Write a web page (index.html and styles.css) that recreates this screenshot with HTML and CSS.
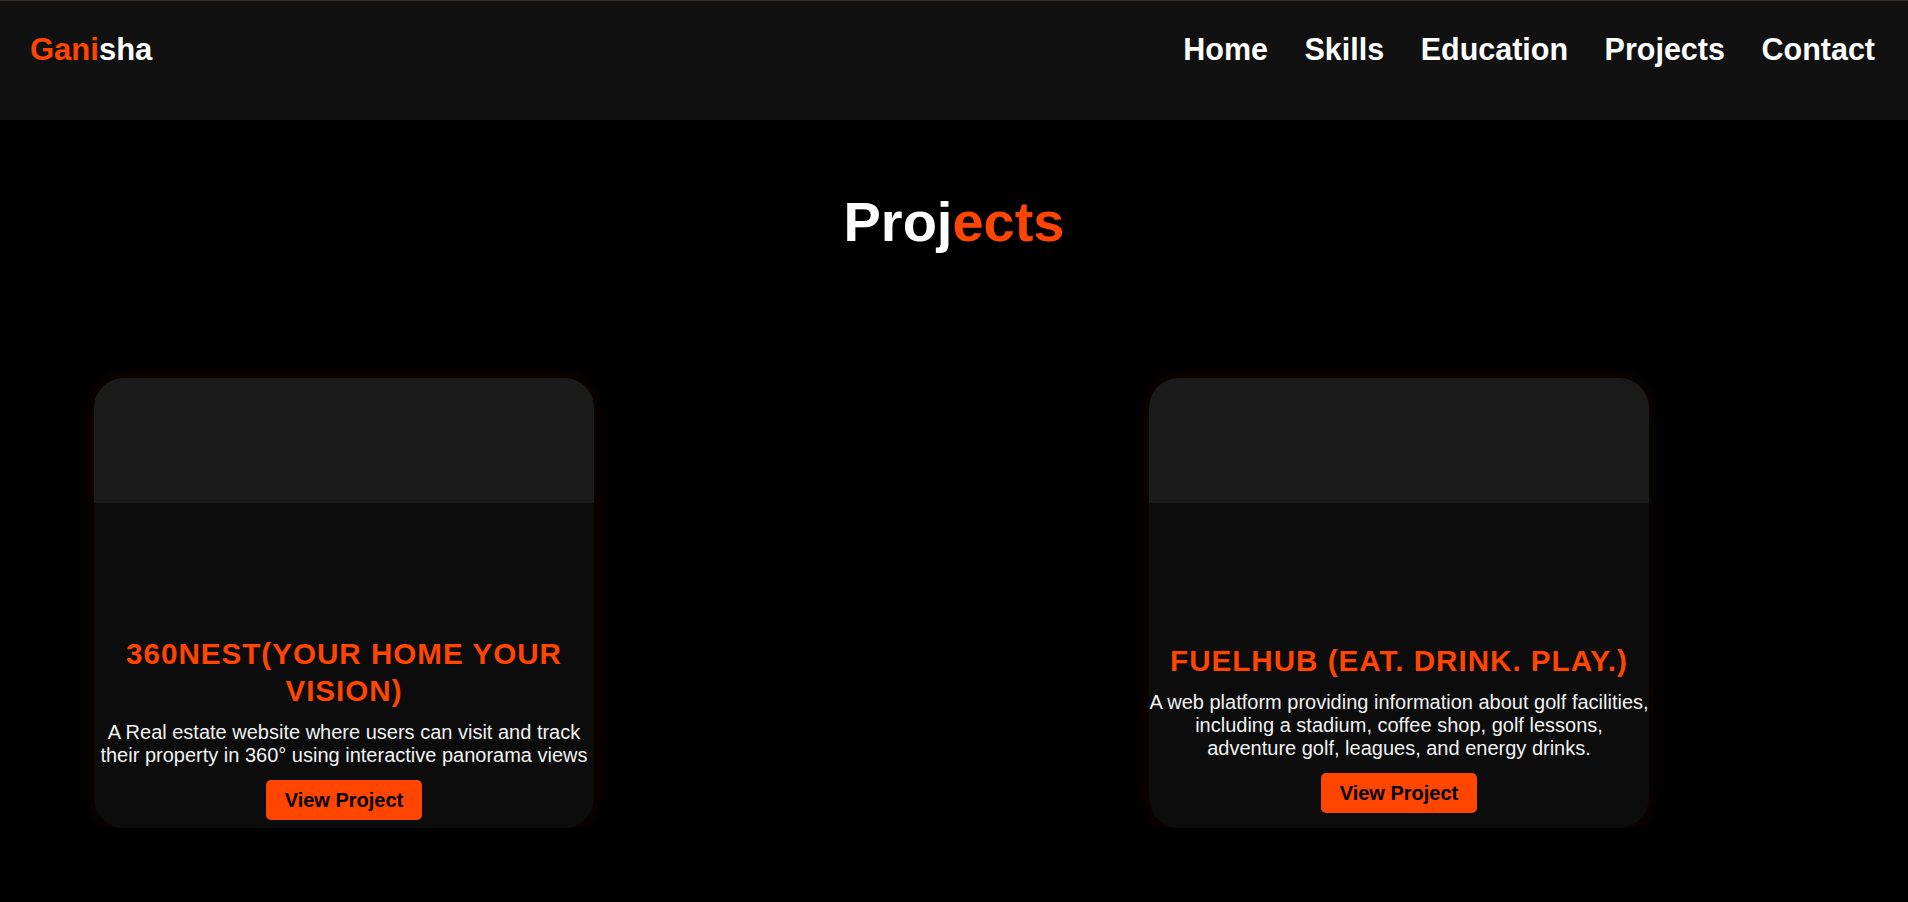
FILE: index.html
```html
<!DOCTYPE html>
<html lang="en">
<head>
<meta charset="utf-8">
<title>Ganisha - Projects</title>
<link rel="stylesheet" href="styles.css">
</head>
<body>
  <header class="site-header">
    <a class="logo" href="#"><span class="accent">Gani</span>sha</a>
    <nav class="nav">
      <a href="#">Home</a>
      <a href="#">Skills</a>
      <a href="#">Education</a>
      <a href="#">Projects</a>
      <a href="#">Contact</a>
    </nav>
  </header>

  <main class="projects">
    <h2 class="section-title">Proj<span class="accent">ects</span></h2>
    <div class="project-grid">
      <article class="card">
        <div class="card-media"></div>
        <div class="card-body">
          <h3 class="card-title">360NEST(YOUR HOME YOUR VISION)</h3>
          <p class="card-desc">A Real estate website where users can visit and track their property in 360° using interactive panorama views</p>
          <a class="btn" href="#">View Project</a>
        </div>
      </article>
      <article class="card">
        <div class="card-media"></div>
        <div class="card-body">
          <h3 class="card-title">FUELHUB (EAT. DRINK. PLAY.)</h3>
          <p class="card-desc">A web platform providing information about golf facilities, including a stadium, coffee shop, golf lessons, adventure golf, leagues, and energy drinks.</p>
          <a class="btn" href="#">View Project</a>
        </div>
      </article>
    </div>
  </main>
</body>
</html>
```
FILE: styles.css
```css
* { box-sizing: border-box; }

html, body {
  margin: 0;
  padding: 0;
  background: #000;
  color: #fff;
  font-family: "Liberation Sans", Arial, sans-serif;
}

a { text-decoration: none; }

.accent { color: #ff4500; }

.site-header {
  height: 120px;
  background: #111111;
  border-top: 1px solid #3b3129;
  padding: 31px 33px 0 30px;
  display: flex;
  justify-content: space-between;
  align-items: flex-start;
}

.logo {
  color: #fff;
  font-weight: 700;
  font-size: 31px;
  line-height: 35px;
}

.nav {
  display: flex;
  gap: 36.5px;
}

.nav a {
  color: #fff;
  font-weight: 700;
  font-size: 30.5px;
  line-height: 35px;
}

.projects {
  padding-top: 70px;
}

.section-title {
  margin: 0;
  text-align: center;
  font-size: 56px;
  font-weight: 700;
  line-height: 63px;
  color: #fff;
}

.project-grid {
  display: grid;
  grid-template-columns: 500px 500px;
  column-gap: 555px;
  padding-left: 94px;
  margin-top: 125px;
}

.card {
  height: 450px;
  border-radius: 30px;
  overflow: hidden;
  background: #0c0c0c;
  box-shadow: 0 0 18px rgba(255, 69, 0, 0.1);
  display: flex;
  flex-direction: column;
}

.card-media {
  height: 250px;
  flex: none;
  background: linear-gradient(#1b1b1b 0, #1b1b1b 125px, transparent 125px);
}

.card-body {
  flex: 1;
  display: flex;
  flex-direction: column;
  align-items: center;
  justify-content: center;
  text-align: center;
}

.card-title {
  margin: 0 0 11px;
  color: #ff4500;
  font-size: 29.6px;
  letter-spacing: 1px;
  line-height: 36.8px;
  font-weight: 700;
  text-transform: uppercase;
}

.card-desc {
  margin: 0 0 13.5px;
  color: #f2f2f2;
  font-size: 20px;
  line-height: 23px;
}

.btn {
  display: inline-block;
  background: #ff4500;
  color: #000;
  font-weight: 700;
  font-size: 20px;
  line-height: 24px;
  padding: 8px 18.5px;
  border-radius: 5px;
}
```
